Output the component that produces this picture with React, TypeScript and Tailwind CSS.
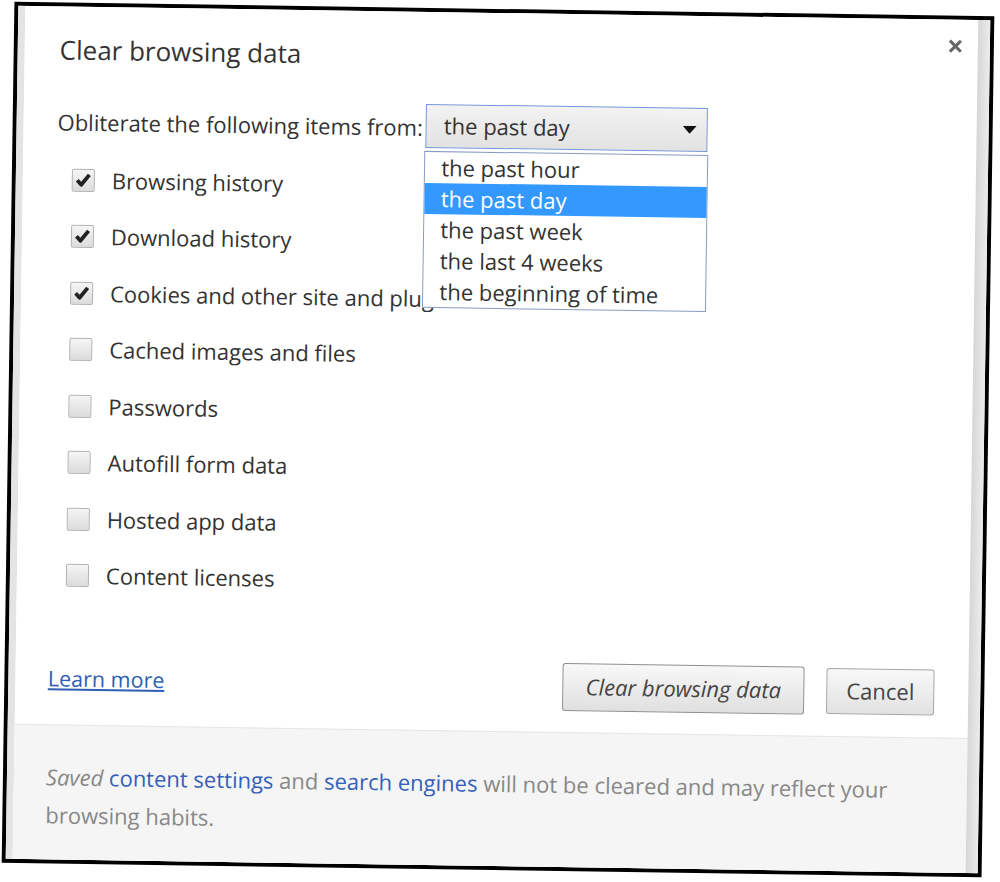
import { useState } from "react";

const ranges = [
  "the past hour",
  "the past day",
  "the past week",
  "the last 4 weeks",
  "the beginning of time",
];

const items = [
  { label: "Browsing history", checked: true },
  { label: "Download history", checked: true },
  { label: "Cookies and other site and plug-in data", checked: true },
  { label: "Cached images and files", checked: false },
  { label: "Passwords", checked: false },
  { label: "Autofill form data", checked: false },
  { label: "Hosted app data", checked: false },
  { label: "Content licenses", checked: false },
];

function Checkbox({ checked }: { checked: boolean }) {
  return (
    <span className="flex h-[23px] w-[23px] shrink-0 items-center justify-center rounded-[2px] border border-[#b3b3b3] bg-linear-to-b from-[#f5f5f5] to-[#dcdcdc]">
      {checked && (
        <svg width="17" height="17" viewBox="0 0 17 17">
          <path
            d="M2.5 8.5 L6.5 13 L14.5 3"
            fill="none"
            stroke="#222"
            strokeWidth="3.8"
            strokeLinejoin="round"
          />
        </svg>
      )}
    </span>
  );
}

export default function App() {
  const [range] = useState(1);

  return (
    <div className="h-[882px] w-[1000px] overflow-hidden bg-white pl-[8px] pt-[8.5px] font-['Open_Sans',sans-serif] text-[#333]">
      <div className="flex h-[861px] w-[980px] rotate-[0.85deg] border-4 border-black">
        <div className="w-[7px] bg-[#e4e4e4]" />

        <div className="flex flex-1 flex-col bg-white">
          <div className="flex h-[717.5px] flex-col">
            {/* title */}
            <div className="flex items-start justify-between pl-[35px] pr-[15px] pt-[19px]">
              <h1 className="mt-[8px] text-[26px] leading-[32px]">Clear browsing data</h1>
              <button className="flex h-[15px] w-[15px] items-center justify-center">
                <svg width="15" height="15" viewBox="0 0 15 15">
                  <path d="M2 2 L13 13 M13 2 L2 13" stroke="#666" strokeWidth="3" />
                </svg>
              </button>
            </div>

            {/* time range */}
            <div className="mt-[32.5px] flex items-center pl-[34px]">
              <span className="mt-[4px] text-[22px]">Obliterate the following items from:</span>
              <div className="relative ml-[3px]">
                <div className="flex h-[44px] w-[282px] items-center justify-between border border-[#7396da] bg-linear-to-b from-[#f3f3f3] to-[#e2e2e2] pl-[17px] pr-[10px]">
                  <span className="text-[22px]">{ranges[range]}</span>
                  <svg width="14" height="8" viewBox="0 0 14 8">
                    <path d="M0 0 L14 0 L7 8 Z" fill="#111" />
                  </svg>
                </div>
                <ul className="absolute left-[-1px] top-[47px] z-10 w-[284px] border border-[#8b9cc2] bg-white">
                  {ranges.map((r, i) => (
                    <li
                      key={r}
                      className={
                        i === range
                          ? "h-[31px] bg-[#3399ff] pl-[16px] text-[22px] leading-[31px] text-white"
                          : "h-[31px] pl-[16px] text-[22px] leading-[31px] text-[#333]"
                      }
                    >
                      {r}
                    </li>
                  ))}
                </ul>
              </div>
            </div>

            {/* checkboxes */}
            <div className="mt-[9.25px] flex flex-col pl-[49px]">
              {items.map((it) => (
                <label key={it.label} className="flex h-[56.5px] items-center gap-[17px]">
                  <Checkbox checked={it.checked} />
                  <span className="text-[22px]">{it.label}</span>
                </label>
              ))}
            </div>

            {/* actions */}
            <div className="mt-[51.75px] flex items-center justify-between pl-[32.5px] pr-[34px]">
              <a href="#" className="text-[21.5px] text-[#2f5fb3] underline">
                Learn more
              </a>
              <div className="flex items-center gap-[22px]">
                <button className="h-[48px] w-[242px] rounded-[3px] border border-[#8f8f8f] bg-linear-to-b from-[#f8f8f8] to-[#e0e0e0] text-[22px] italic text-[#444]">
                  Clear browsing data
                </button>
                <button className="h-[46px] w-[108px] rounded-[3px] border border-[#a5a5a5] bg-linear-to-b from-[#f8f8f8] to-[#e2e2e2] text-[22px] text-[#444]">
                  Cancel
                </button>
              </div>
            </div>
          </div>

          {/* footer */}
          <div className="flex-1 border-t border-[#e6e6e6] bg-[#f5f5f5] pl-[32px] pr-[60px] pt-[32px] text-[22px] leading-[38px] text-[#888]">
            <span className="italic">Saved</span>{" "}
            <a href="#" className="text-[#3560b8]">content settings</a> and{" "}
            <a href="#" className="text-[#3560b8]">search engines</a> will not be cleared and may reflect your browsing habits.
          </div>
        </div>

        <div className="w-[12px] bg-linear-to-r from-[#d6d6d6] to-[#ececec]" />
      </div>
    </div>
  );
}
